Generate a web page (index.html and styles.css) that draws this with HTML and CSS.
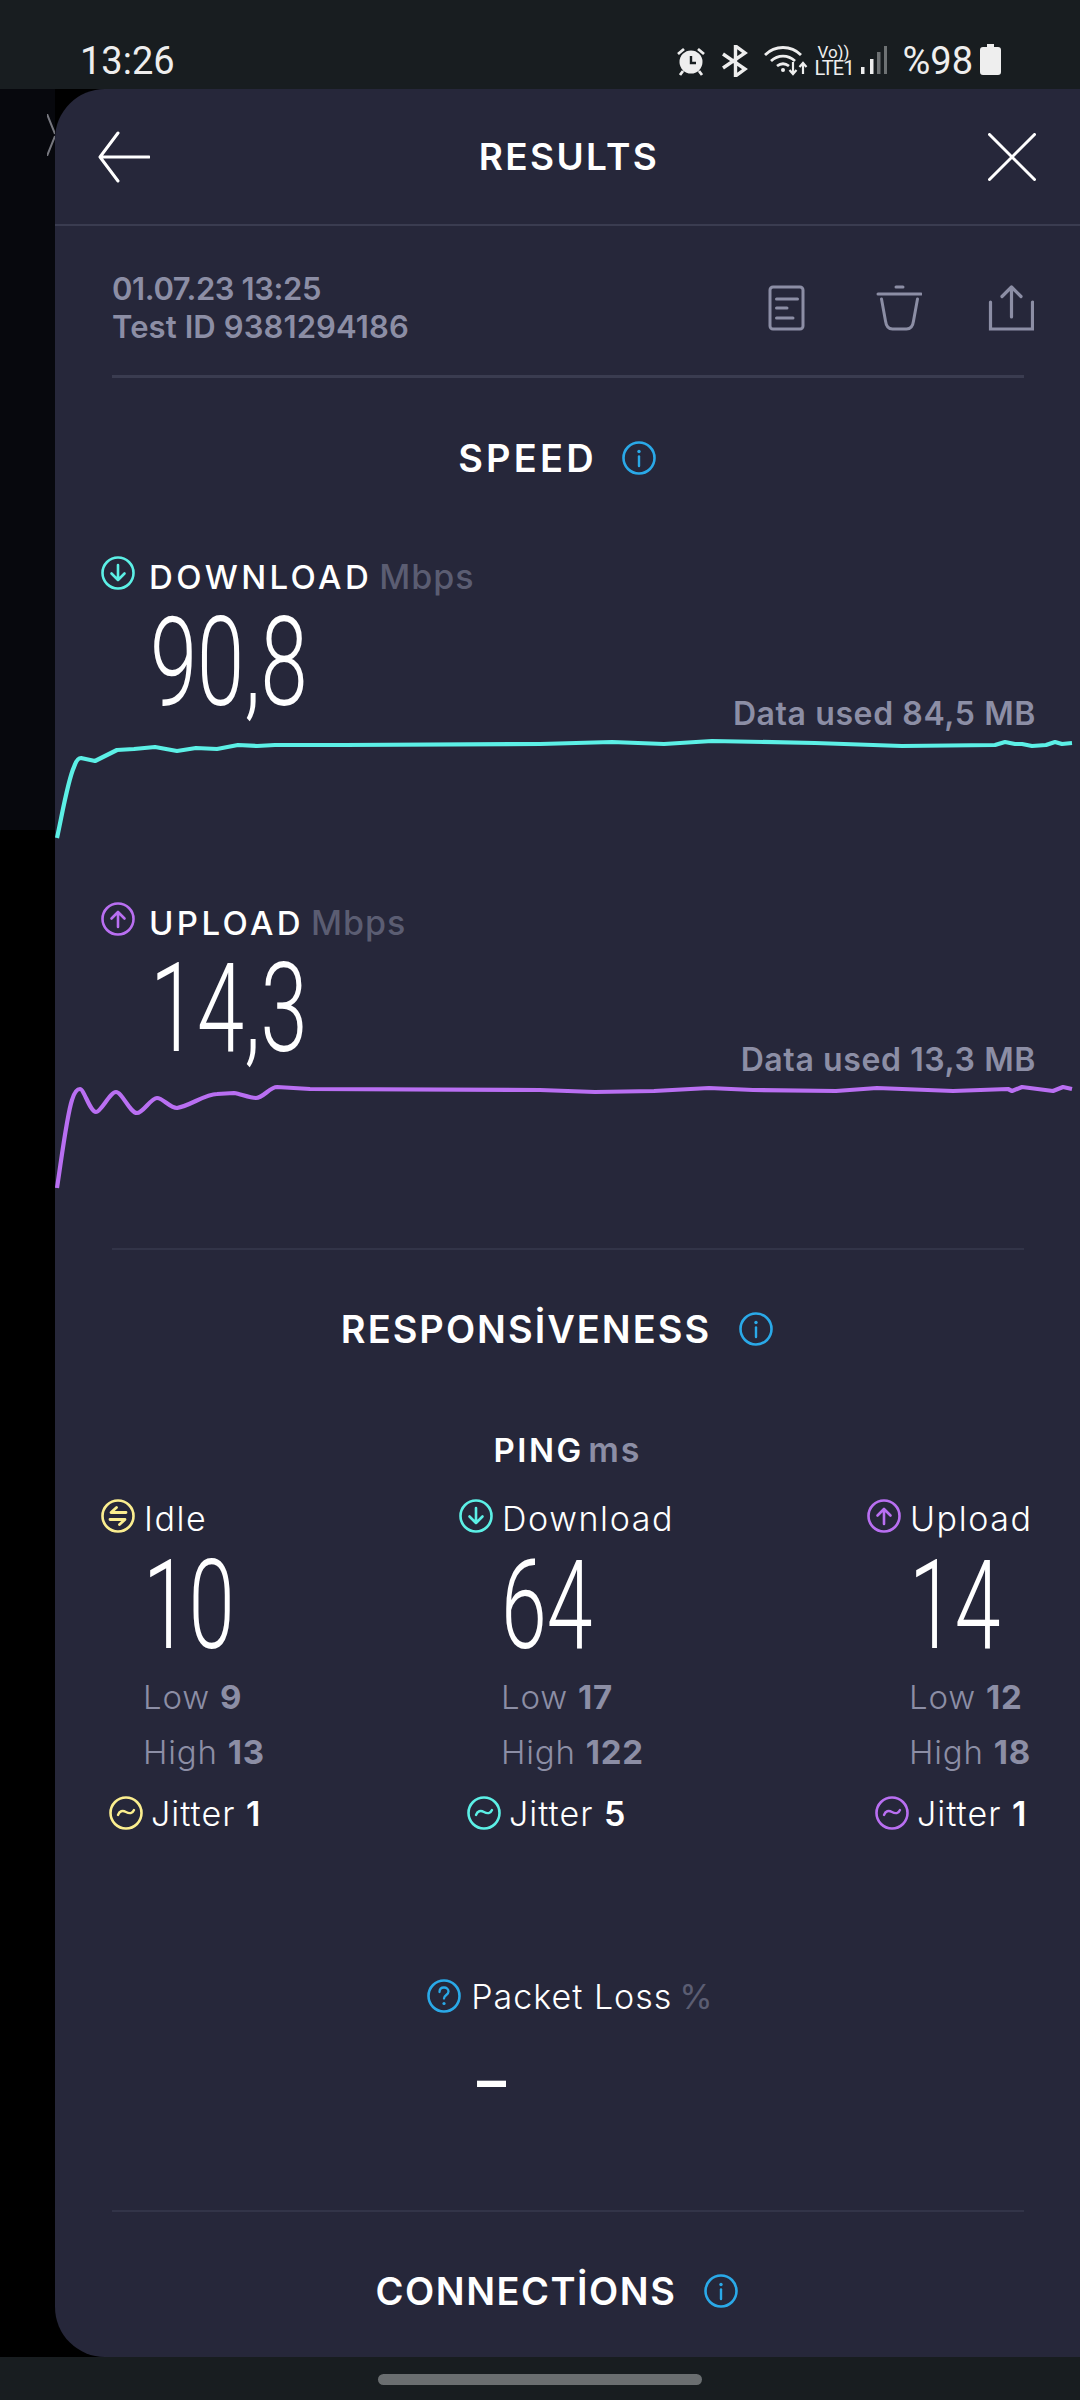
FILE: index.html
```html
<!DOCTYPE html>
<html lang="en">
<head>
  <meta charset="UTF-8">
  <meta name="viewport" content="width=device-width, initial-scale=1.0">
  <link rel="stylesheet" href="styles.css">
</head>
<body>

  <svg class="defs" width="0" height="0">
    <symbol id="i-down" viewBox="0 0 34 34">
      <circle cx="17" cy="17" r="15.5" fill="none" stroke="currentColor" stroke-width="2.6"/>
      <path d="M17 9v15M10.5 17.5 17 24l6.500-6.500" fill="none" stroke="currentColor" stroke-width="2.600" stroke-linecap="round" stroke-linejoin="round"/>
    </symbol>
    <symbol id="i-up" viewBox="0 0 34 34">
      <circle cx="17" cy="17" r="15.5" fill="none" stroke="currentColor" stroke-width="2.6"/>
      <path d="M17 25V10M10.500 16.500 17 10l6.500 6.500" fill="none" stroke="currentColor" stroke-width="2.600" stroke-linecap="round" stroke-linejoin="round"/>
    </symbol>
    <symbol id="i-idle" viewBox="0 0 34 34">
      <circle cx="17" cy="17" r="15.500" fill="none" stroke="currentColor" stroke-width="2.600"/>
      <path d="M25 13.500H10l5.500-5M9 20.500h15l-5.500 5" fill="none" stroke="currentColor" stroke-width="2.800" stroke-linecap="round" stroke-linejoin="round"/>
    </symbol>
    <symbol id="i-jitter" viewBox="0 0 34 34">
      <circle cx="17" cy="17" r="15.500" fill="none" stroke="currentColor" stroke-width="2.600"/>
      <path d="M9 19c1.500-4 4.500-5 8-3s6.500 1.500 8-2" fill="none" stroke="currentColor" stroke-width="2.400" stroke-linecap="round"/>
    </symbol>
    <symbol id="i-info" viewBox="0 0 34 34">
      <circle cx="17" cy="17" r="15.500" fill="none" stroke="currentColor" stroke-width="2.600"/>
      <circle cx="17" cy="10.500" r="1.700" fill="currentColor"/>
      <path d="M17 15.500v9.500" fill="none" stroke="currentColor" stroke-width="2.400" stroke-linecap="round"/>
    </symbol>
    <symbol id="i-help" viewBox="0 0 34 34">
      <circle cx="17" cy="17" r="15.500" fill="none" stroke="currentColor" stroke-width="2.600"/>
      <path d="M12.500 13c0-3 2-4.500 4.500-4.500s4.500 1.600 4.500 4c0 3.500-4.500 3.500-4.500 7" fill="none" stroke="currentColor" stroke-width="2.300" stroke-linecap="round"/>
      <circle cx="17" cy="24.500" r="1.600" fill="currentColor"/>
    </symbol>
  </svg>

  <div class="status-bar">
    <span class="clock">13:26</span>
    <div class="status-icons">
      <svg class="st-alarm" width="30" height="30" viewBox="0 0 30 30">
        <circle cx="15" cy="16" r="11.500" fill="#eee"/>
        <path d="M15 10v7h5" fill="none" stroke="#181d20" stroke-width="2.400"/>
        <path d="M2 8l6-5M28 8l-6-5M7 25l-3 4M23 25l3 4" fill="none" stroke="#eee" stroke-width="2.800"/>
      </svg>
      <svg class="st-bt" width="28" height="32" viewBox="0 0 28 32">
        <path d="M2 9l22 15-9.500 7V1L24 8 2 23" fill="none" stroke="#eee" stroke-width="3.400"/>
      </svg>
      <svg class="st-wifi" width="44" height="32" viewBox="0 0 44 32">
        <path d="M1 10C11 0 27 0 37 10M7 16c7-6.500 17-6.500 24 0M13 21c4-3 8-3 12 0" fill="none" stroke="#eee" stroke-width="2.800"/>
        <circle cx="19" cy="25" r="2" fill="#eee"/>
        <path d="M29 17v12M25.500 25l3.500 4 3.500-4M39 29V18M35.500 22l3.500-4 3.500 4" fill="none" stroke="#eee" stroke-width="2.200"/>
      </svg>
      <div class="st-net"><span>Vo))</span><span>LTE1</span></div>
      <svg class="st-signal" width="26" height="30" viewBox="0 0 26 30">
        <rect x="0" y="22" width="3.500" height="7" fill="#eee"/>
        <rect x="9" y="14" width="3.500" height="15" fill="#eee"/>
        <rect x="16" y="7" width="3.500" height="22" fill="#6d7173"/>
        <rect x="23" y="1" width="3" height="28" fill="#6d7173"/>
      </svg>
      <span class="battery-text">%98</span>
      <svg class="st-battery" width="21" height="31" viewBox="0 0 21 31">
        <path d="M7 0h7v3h4q3 0 3 3v22q0 3-3 3H3q-3 0-3-3V6q0-3 3-3h4z" fill="#eee"/>
      </svg>
    </div>
  </div>

  <div class="middle">
    <div class="behind">
      <div class="behind-top">
        <svg class="behind-x" width="8" height="42" viewBox="0 0 8 42">
          <path d="M0 0l8 20M8 22L0 42" fill="none" stroke="#77787f" stroke-width="2"/>
        </svg>
      </div>
    </div>

    <div class="sheet">
      <div class="header">
        <svg width="52" height="52" viewBox="0 0 52 52">
          <path d="M51 26H3M20 2 2 26l18 24" fill="none" stroke="#fff" stroke-width="3" stroke-linecap="round" stroke-linejoin="round"/>
        </svg>
        <h1 class="header-title">RESULTS</h1>
        <svg width="48" height="48" viewBox="0 0 48 48">
          <path d="M1.500 1.500l45 45M46.500 1.500l-45 45" fill="none" stroke="#fff" stroke-width="3" stroke-linecap="round"/>
        </svg>
      </div>

      <div class="meta">
        <div class="meta-text">
          <div class="meta-date">01.07.23 13:25</div>
          <div class="meta-id">Test ID 9381294186</div>
        </div>
        <div class="meta-icons">
          <svg width="46" height="46" viewBox="0 0 46 46">
            <rect x="7" y="2" width="33" height="42" rx="3" fill="none" stroke="#8c8ea5" stroke-width="3"/>
            <path d="M13.500 14h21M13.500 23h10.500M13.500 33h16.500" fill="none" stroke="#8c8ea5" stroke-width="3" stroke-linecap="round"/>
          </svg>
          <svg width="46" height="46" viewBox="0 0 46 46">
            <path d="M2 9h43M20 2h7" fill="none" stroke="#8c8ea5" stroke-width="3" stroke-linecap="round"/>
            <path d="M5.500 14l4 22q1 8 7 8h14q6 0 7-8l4-22" fill="none" stroke="#8c8ea5" stroke-width="3" stroke-linecap="round"/>
          </svg>
          <svg width="46" height="46" viewBox="0 0 46 46">
            <path d="M2.500 17v27h42V17" fill="none" stroke="#8c8ea5" stroke-width="3.200" stroke-linecap="round"/>
            <path d="M23.500 32V3M14 11.500 23.500 2 33 11.500" fill="none" stroke="#8c8ea5" stroke-width="3.200" stroke-linecap="round" stroke-linejoin="round"/>
          </svg>
        </div>
      </div>

      <div class="section-title first">
        <h2 class="title-speed">SPEED</h2>
        <svg class="info" width="34" height="34"><use href="#i-info"/></svg>
      </div>

      <div class="metric metric-down">
        <div class="metric-head">
          <svg class="cyan" width="34" height="34"><use href="#i-down"/></svg>
          <span class="metric-name">DOWNLOAD</span>
          <span class="metric-unit">Mbps</span>
        </div>
        <div class="metric-row">
          <span class="num">90,8</span>
          <span class="data-used">Data used 84,5 MB</span>
        </div>
        <svg class="chart" width="1025" height="110" viewBox="55 735 1025 110">
          <path d="M57 838C63 810 68 780 74 767C76 761 78 758 81 758L95 761L117 750L134 749L155 747L177 751L196 748L217 749L238 745L257 746L275 745L344 745L540 744L612 742L664 744L712 741L815 743L902 746L995 745L1005 742L1015 744L1022 744L1032 746L1046 745L1055 742L1062 744L1072 743" fill="none" stroke="#5cf0e6" stroke-width="4.200" stroke-linejoin="round"/>
        </svg>
      </div>

      <div class="metric metric-up">
        <div class="metric-head">
          <svg class="purple" width="34" height="34"><use href="#i-up"/></svg>
          <span class="metric-name">UPLOAD</span>
          <span class="metric-unit">Mbps</span>
        </div>
        <div class="metric-row">
          <span class="num">14,3</span>
          <span class="data-used">Data used 13,3 MB</span>
        </div>
        <svg class="chart" width="1025" height="110" viewBox="55 1081 1025 110">
          <path d="M57 1188C62 1155 67 1115 72 1100C75 1090 78 1089 80 1089C84 1089 90 1112 96 1112C101 1112 110 1092 116 1092C122 1092 130 1113 137 1113C143 1113 151 1098 157 1098C163 1098 170 1108 177 1108C190 1106 205 1094 217 1094L234 1093C241 1094 249 1098 256 1098C263 1098 270 1087 277 1087L310 1089L540 1090L595 1092L654 1091L709 1088L753 1090L836 1091L877 1088L953 1091L1008 1089L1012 1091L1022 1087L1053 1091L1063 1087L1072 1089" fill="none" stroke="#b96ff2" stroke-width="4.200" stroke-linejoin="round"/>
        </svg>
      </div>

      <div class="divider"></div>

      <div class="section-title">
        <h2>RESPONSİVENESS</h2>
        <svg class="info" width="34" height="34"><use href="#i-info"/></svg>
      </div>

      <div class="ping-title"><b>PING</b> <span>ms</span></div>

      <div class="ping-grid">
        <div class="ping-col">
          <div class="ping-head">
            <svg class="yellow" width="34" height="34"><use href="#i-idle"/></svg>
            <span>Idle</span>
          </div>
          <div class="ping-value"><span class="num">10</span></div>
          <div class="range">Low <b>9</b></div>
          <div class="range">High <b>13</b></div>
          <div class="jitter">
            <svg class="yellow" width="34" height="34"><use href="#i-jitter"/></svg>
            <span>Jitter <b>1</b></span>
          </div>
        </div>
        <div class="ping-col">
          <div class="ping-head">
            <svg class="cyan" width="34" height="34"><use href="#i-down"/></svg>
            <span>Download</span>
          </div>
          <div class="ping-value"><span class="num">64</span></div>
          <div class="range">Low <b>17</b></div>
          <div class="range">High <b>122</b></div>
          <div class="jitter">
            <svg class="cyan" width="34" height="34"><use href="#i-jitter"/></svg>
            <span>Jitter <b>5</b></span>
          </div>
        </div>
        <div class="ping-col">
          <div class="ping-head">
            <svg class="purple" width="34" height="34"><use href="#i-up"/></svg>
            <span>Upload</span>
          </div>
          <div class="ping-value"><span class="num">14</span></div>
          <div class="range">Low <b>12</b></div>
          <div class="range">High <b>18</b></div>
          <div class="jitter">
            <svg class="purple" width="34" height="34"><use href="#i-jitter"/></svg>
            <span>Jitter <b>1</b></span>
          </div>
        </div>
      </div>

      <div class="packet">
        <div class="packet-head">
          <svg class="info" width="34" height="34"><use href="#i-help"/></svg>
          <span>Packet Loss</span>
          <span class="packet-unit">%</span>
        </div>
        <div class="packet-value">-</div>
      </div>

      <div class="divider divider-last"></div>

      <div class="section-title">
        <h2 class="title-conn">CONNECTİONS</h2>
        <svg class="info" width="34" height="34"><use href="#i-info"/></svg>
      </div>
    </div>
  </div>

  <div class="nav-bar"><div class="nav-pill"></div></div>

</body>
</html>
```

FILE: styles.css
```css
* {
  box-sizing: border-box;
}

body {
  margin: 0;
  width: 1080px;
  height: 2400px;
  overflow: hidden;
  display: flex;
  flex-direction: column;
  background-color: #000;
  color: #fff;
  font-family: Inter, "Liberation Sans", sans-serif;
}

svg {
  display: block;
  flex-shrink: 0;
}

.defs {
  position: absolute;
}

.cyan { color: #5cf0e6; }
.purple { color: #b96ff2; }
.yellow { color: #fbee8f; }
.info { color: #2aa9e8; }

/* status bar */
.status-bar {
  height: 89px;
  flex-shrink: 0;
  background-color: #181d20;
  display: flex;
  justify-content: space-between;
  align-items: flex-start;
  padding: 40px 79px 0 80px;
}

.clock,
.battery-text {
  font-family: Roboto, sans-serif;
  font-size: 38px;
  line-height: 42px;
  color: #eee;
}

.status-icons {
  display: flex;
  align-items: flex-start;
}

.st-alarm { margin: 6px 15px 0 0; }
.st-bt { margin: 5px 15px 0 0; }
.st-wifi { margin: 5px 6px 0 0; }
.st-signal { margin: 5px 15px 0 9px; }
.st-battery { margin: 4px 0 0 7px; }

.st-net {
  width: 38px;
  display: flex;
  flex-direction: column;
  font-family: Roboto, sans-serif;
  color: #eee;
  margin-top: 5px;
}

.st-net span:first-child {
  padding-left: 3px;
  font-size: 17px;
  line-height: 14px;
}

.st-net span:last-child {
  font-size: 20px;
  line-height: 19px;
  letter-spacing: -0.8px;
  white-space: nowrap;
}

/* middle area */
.middle {
  flex: 1;
  display: flex;
  min-height: 0;
}

.behind {
  width: 55px;
  flex-shrink: 0;
}

.behind-top {
  height: 741px;
  background-color: #07080d;
  padding: 25px 0 0 47px;
}

.sheet {
  flex: 1;
  min-width: 0;
  background-color: #26273a;
  border-radius: 50px 0 0 50px;
  overflow: hidden;
}

.header {
  height: 137px;
  display: flex;
  justify-content: space-between;
  align-items: center;
  padding: 0 44px 0 43px;
  border-bottom: 2px solid #3a3c50;
}

.header-title {
  margin: 0;
  font-size: 37px;
  line-height: 44px;
  font-weight: 600;
  letter-spacing: 2.4px;
}

.meta {
  height: 152px;
  margin: 0 56px 0 57px;
  padding-top: 14px;
  display: flex;
  justify-content: space-between;
  align-items: center;
  border-bottom: 3px solid #3a3c50;
}

.meta-text {
  font-size: 31px;
  line-height: 38px;
  font-weight: 600;
  color: #8c8ea5;
}

.meta-date {
  letter-spacing: -0.4px;
}

.meta-id {
  letter-spacing: 0.1px;
}

.meta-icons {
  display: flex;
  gap: 66.5px;
  margin-right: -10px;
}

.section-title {
  height: 50px;
  margin-top: 54px;
  padding-right: 21px;
  display: flex;
  justify-content: center;
  align-items: center;
  gap: 28px;
}

.section-title.first {
  margin-top: 55px;
  gap: 25px;
}

.section-title h2 {
  margin: 0;
  font-size: 38px;
  line-height: 50px;
  font-weight: 600;
  letter-spacing: 2px;
}

.section-title .title-speed {
  letter-spacing: 3.2px;
}

.section-title .title-conn {
  letter-spacing: 1.5px;
}

.metric-down {
  margin-top: 70px;
}

.metric-up {
  margin-top: 54px;
}

.metric-head {
  height: 40px;
  padding-left: 46px;
  display: flex;
  align-items: center;
}

.metric-head svg {
  margin-right: 14px;
}

.metric-name {
  margin: 7px 7px 0 0;
  font-size: 33px;
  font-weight: 500;
  letter-spacing: 3.4px;
}

.metric-unit {
  margin-top: 7px;
  font-size: 34px;
  font-weight: 500;
  color: #5b5d72;
  letter-spacing: 1px;
}

.metric-row {
  height: 142px;
  display: flex;
  justify-content: space-between;
  align-items: flex-start;
  padding: 0 44px 0 95px;
}

.num {
  display: inline-block;
  font-family: Roboto, sans-serif;
  font-size: 124px;
  line-height: 140px;
  font-weight: 300;
  transform: scaleX(0.685);
  transform-origin: left center;
}

.data-used {
  align-self: flex-end;
  margin-bottom: 5px;
  font-size: 32px;
  line-height: 32px;
  font-weight: 600;
  letter-spacing: 0.6px;
  color: #8c8ea5;
}

.divider {
  height: 2px;
  margin: 57px 56px 0 57px;
  background-color: #323448;
}

.divider-last {
  margin-top: 0;
}

.ping-title {
  height: 40px;
  margin-top: 76px;
  text-align: center;
  line-height: 40px;
}

.ping-title b {
  font-size: 33px;
  font-weight: 600;
  letter-spacing: 2.5px;
}

.ping-title span {
  font-size: 34px;
  font-weight: 600;
  letter-spacing: 2px;
  color: #8c8ea5;
}

.ping-grid {
  margin-top: 26px;
  padding-left: 46px;
  display: grid;
  grid-template-columns: 358px 408px 1fr;
}

.ping-head {
  height: 40px;
  display: flex;
  align-items: center;
  gap: 9px;
  font-size: 34px;
  font-weight: 300;
  letter-spacing: 1.6px;
}

.ping-head span {
  margin-top: 5px;
}

.ping-value {
  height: 134px;
  padding: 6px 0 0 42px;
}

.ping-value .num {
  line-height: 128px;
  transform: scaleX(0.665);
}

.range {
  height: 55px;
  padding-left: 42px;
  font-size: 33px;
  line-height: 55px;
  font-weight: 300;
  letter-spacing: 0.8px;
  color: #8c8ea5;
  white-space: nowrap;
}

.range b {
  font-weight: 700;
}

.jitter {
  height: 40px;
  margin-top: 13px;
  padding-left: 8px;
  display: flex;
  align-items: center;
  gap: 8px;
  font-size: 34px;
  font-weight: 300;
  letter-spacing: 1px;
  white-space: nowrap;
}

.jitter b {
  font-weight: 600;
}

.packet {
  height: 234px;
  margin-top: 143px;
  display: flex;
  flex-direction: column;
  align-items: center;
}

.packet-head {
  height: 40px;
  padding-left: 6px;
  display: flex;
  align-items: center;
  gap: 10px;
  font-size: 34px;
  font-weight: 300;
  letter-spacing: 1px;
}

.packet-head span:last-child {
  margin-left: -3px;
}

.packet-unit {
  color: #5b5d72;
  font-weight: 400;
}

.packet-value {
  align-self: flex-start;
  margin: 35px 0 0 419px;
  font-family: Roboto, sans-serif;
  font-size: 124px;
  line-height: 60px;
  font-weight: 300;
}

/* bottom nav */
.nav-bar {
  height: 43px;
  flex-shrink: 0;
  background-color: #181d20;
  display: flex;
  justify-content: center;
  padding-top: 17px;
}

.nav-pill {
  width: 324px;
  height: 11px;
  border-radius: 6px;
  background-color: #6a6e70;
}
```
